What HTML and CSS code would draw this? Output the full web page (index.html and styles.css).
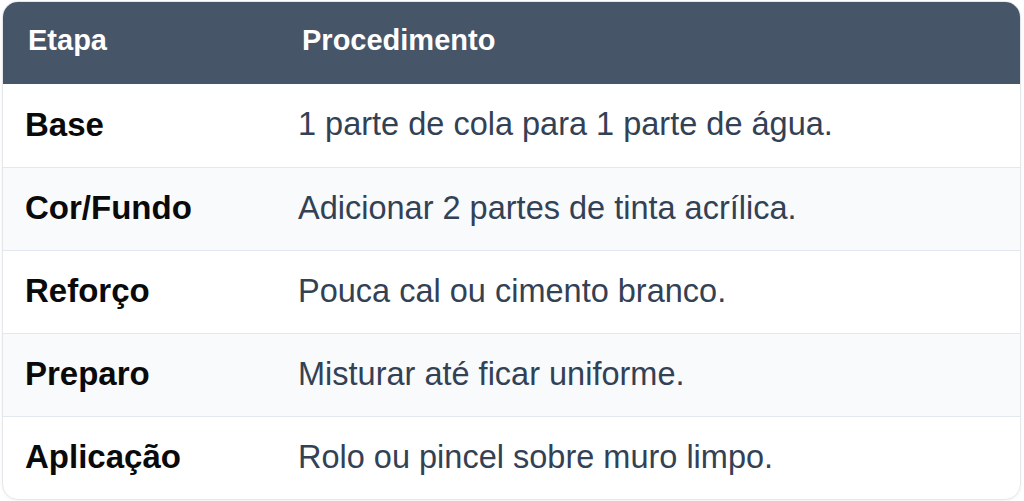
FILE: index.html
```html
<!DOCTYPE html>
<html lang="pt">
<head>
<meta charset="utf-8">
<link rel="stylesheet" href="styles.css">
</head>
<body>
<div class="wrap">
  <table class="steps">
    <thead>
      <tr><th class="c1">Etapa</th><th class="c2">Procedimento</th></tr>
    </thead>
    <tbody>
      <tr><td class="c1">Base</td><td class="c2">1 parte de cola para 1 parte de água.</td></tr>
      <tr><td class="c1">Cor/Fundo</td><td class="c2">Adicionar 2 partes de tinta acrílica.</td></tr>
      <tr><td class="c1">Reforço</td><td class="c2">Pouca cal ou cimento branco.</td></tr>
      <tr><td class="c1">Preparo</td><td class="c2">Misturar até ficar uniforme.</td></tr>
      <tr><td class="c1">Aplicação</td><td class="c2">Rolo ou pincel sobre muro limpo.</td></tr>
    </tbody>
  </table>
</div>
</body>
</html>
```
FILE: styles.css
```css
html, body {
  margin: 0;
  padding: 0;
  background: #ffffff;
}
.wrap {
  padding: 1px 3px 2px 2px;
}
.steps {
  width: 100%;
  border-collapse: separate;
  border-spacing: 0;
  border: 1px solid #e5e7eb;
  border-radius: 16px;
  overflow: hidden;
  font-family: "Liberation Sans", Arial, sans-serif;
  box-shadow: 0 1px 3px rgba(0,0,0,0.06);
}
.steps th {
  background: #475569;
  color: #ffffff;
  font-weight: bold;
  font-size: 29px;
  text-align: left;
  height: 82px;
  box-sizing: border-box;
  padding: 0 22px 5px 25px;
}
.steps th.c1 {
  width: 273px;
}
.steps th.c2 {
  padding-left: 26px;
}
.steps td {
  height: 83px;
  box-sizing: border-box;
  padding: 0 22px 2px 22px;
  border-top: 1px solid #e2e8f0;
  font-size: 32.5px;
  vertical-align: middle;
}
.steps tbody tr:first-child td {
  border-top: none;
}
.steps tbody tr:nth-child(even) td {
  background: #f8fafc;
}
.steps td.c1 {
  width: 273px;
  font-weight: bold;
  color: #0a0a0a;
  font-size: 33px;
}
.steps td.c2 {
  color: #334155;
}
```
